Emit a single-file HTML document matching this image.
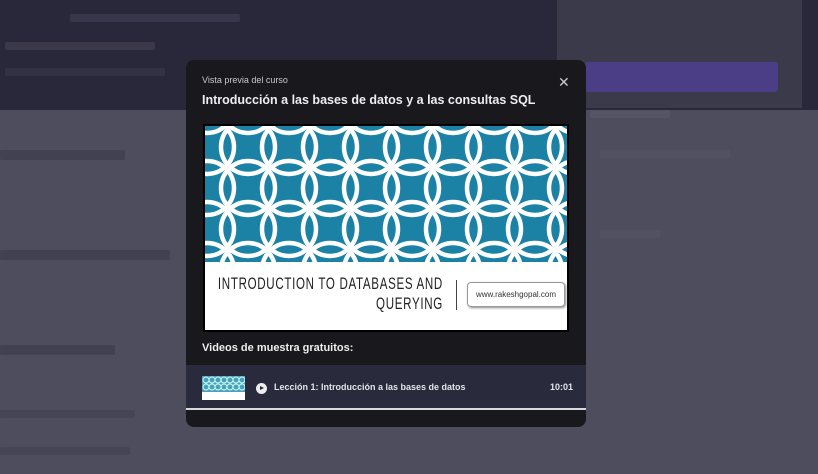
<!DOCTYPE html>
<html><head><meta charset="utf-8"><style>
*{margin:0;padding:0;box-sizing:border-box}
body{width:818px;height:474px;overflow:hidden;background:#4e4d5d;font-family:"Liberation Sans",sans-serif;position:relative}
.top{position:absolute;left:0;top:0;width:818px;height:110px;background:#29273a}
.side{position:absolute;left:557px;top:0;width:245px;height:108px;background:#3b3a4b}
.btn{position:absolute;left:585px;top:62px;width:193px;height:30px;background:#4b3d86;border-radius:3px}
.bl{position:absolute;background:#5b5a6a;height:8px;border-radius:2px}
.modal{position:absolute;left:186px;top:60px;width:400px;height:367px;background:#18181d;border-radius:8px;overflow:hidden}
.sub{position:absolute;left:16px;top:15px;font-size:9px;color:#c8c8cc}
.title{position:absolute;left:16px;top:33px;font-size:12.5px;font-weight:bold;color:#eeeef2;white-space:nowrap}
.x{position:absolute;left:372px;top:14px;color:#ccc;font-size:14px}
.img{position:absolute;left:17px;top:64px;width:366px;height:208px;background:#000;padding:2px}
.pat{width:362px;height:136px;display:block}
.wh{background:#fff;height:68px;position:relative}
.t1{position:absolute;right:124px;top:12px;font-size:17px;letter-spacing:1px;color:#222;text-align:right;line-height:20px;white-space:nowrap;transform:scaleX(.68);transform-origin:right}
.vl{position:absolute;left:251px;top:18px;width:1px;height:30px;background:#444}
.pill{position:absolute;left:262px;top:20px;width:98px;height:25px;border:1px solid #999;border-radius:4px;box-shadow:1px 1px 2px #888;font-size:8px;color:#333;text-align:center;line-height:23px}
.vid{position:absolute;left:16px;top:282px;font-size:11px;font-weight:bold;color:#eee}
.row{position:absolute;left:0;top:305px;width:400px;height:45px;background:#292a3b;border-bottom:2px solid #d8d8e0}
.thumb{position:absolute;left:16px;top:11px;width:43px;height:24px;background:#fff}
.play{position:absolute;left:70px;top:18px;width:11px;height:11px;border-radius:50%;background:#eee}
.play:after{content:"";position:absolute;left:4px;top:3px;border-left:4px solid #292a3b;border-top:2.5px solid transparent;border-bottom:2.5px solid transparent}
.les{position:absolute;left:88px;top:17px;font-size:9px;font-weight:bold;color:#e4e4ea}
.dur{position:absolute;left:364px;top:17px;font-size:9px;font-weight:bold;color:#e4e4ea}
</style></head><body>
<div class="top"></div>
<div class="bl" style="left:70px;top:14px;width:170px;background:#38364a"></div>
<div class="bl" style="left:5px;top:42px;width:150px;background:#3a3849"></div>
<div class="bl" style="left:5px;top:68px;width:160px;background:#333144"></div>
<div class="side"></div>
<div class="btn"></div>
<div class="bl" style="left:0;top:150px;width:125px;background:#424152;height:10px"></div>
<div class="bl" style="left:0;top:250px;width:170px;background:#424152;height:10px"></div>
<div class="bl" style="left:0;top:345px;width:115px;background:#424152;height:10px"></div>
<div class="bl" style="left:0;top:410px;width:135px;background:#464556"></div>
<div class="bl" style="left:0;top:447px;width:130px;background:#464556"></div>
<div class="bl" style="left:590px;top:110px;width:80px;background:#555465"></div>
<div class="bl" style="left:600px;top:150px;width:130px;background:#535262"></div>
<div class="bl" style="left:600px;top:230px;width:60px;background:#535262"></div>
<div class="modal">
<div class="sub">Vista previa del curso</div>
<div class="title">Introducción a las bases de datos y a las consultas SQL</div>
<div class="x">✕</div>
<div class="img">
<svg class="pat" viewBox="0 0 362 136"><defs><pattern id="p" width="41" height="41" patternUnits="userSpaceOnUse" x="2" y="-20">
<rect width="41" height="41" fill="#1b82a6"/>
<g fill="none" stroke="#fff" stroke-width="4.5">
<circle cx="0" cy="0" r="27"/><circle cx="41" cy="0" r="27"/><circle cx="0" cy="41" r="27"/><circle cx="41" cy="41" r="27"/></g></pattern></defs>
<rect width="362" height="136" fill="url(#p)"/></svg>
<div class="wh"><div class="t1">INTRODUCTION TO DATABASES AND<br>QUERYING</div><div class="vl"></div><div class="pill">www.rakeshgopal.com</div></div>
</div>
<div class="vid">Videos de muestra gratuitos:</div>
<div class="row"><div class="thumb"><svg width="43" height="16"><rect width="43" height="16" fill="#4aa0be"/><g fill="none" stroke="#cfe" stroke-width="1"><circle cx="4" cy="4" r="3"/><circle cx="10" cy="4" r="3"/><circle cx="16" cy="4" r="3"/><circle cx="22" cy="4" r="3"/><circle cx="28" cy="4" r="3"/><circle cx="34" cy="4" r="3"/><circle cx="40" cy="4" r="3"/><circle cx="4" cy="11" r="3"/><circle cx="10" cy="11" r="3"/><circle cx="16" cy="11" r="3"/><circle cx="22" cy="11" r="3"/><circle cx="28" cy="11" r="3"/><circle cx="34" cy="11" r="3"/><circle cx="40" cy="11" r="3"/></g></svg></div><div class="play"></div><div class="les">Lección 1: Introducción a las bases de datos</div><div class="dur">10:01</div></div>
</div>
</body></html>
